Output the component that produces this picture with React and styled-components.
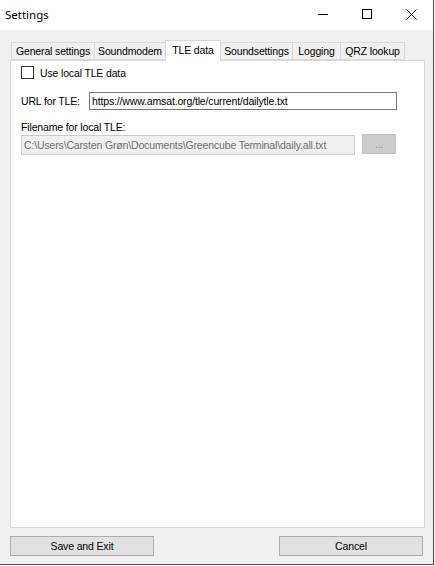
import React from "react";
import styled, { createGlobalStyle } from "styled-components";

const GlobalStyle = createGlobalStyle`
  html, body {
    margin: 0;
    padding: 0;
    background: #ffffff;
  }
  * {
    box-sizing: border-box;
  }
`;

const tabs = [
  { label: "General settings", width: 84 },
  { label: "Soundmodem", width: 72 },
  { label: "TLE data", width: 56, active: true },
  { label: "Soundsettings", width: 73 },
  { label: "Logging", width: 49 },
  { label: "QRZ lookup", width: 65 },
];

const App = () => {
  return (
    <>
      <GlobalStyle />
      <Window>
        <TitleBar>
          <Title>Settings</Title>
          <Controls>
            <CtrlButton>
              <svg width="10" height="10" viewBox="0 0 10 10">
                <line x1="0" y1="5.5" x2="10" y2="5.5" stroke="#000" strokeWidth="1" />
              </svg>
            </CtrlButton>
            <CtrlButton>
              <svg width="10" height="10" viewBox="0 0 10 10">
                <rect x="0.5" y="0.5" width="9" height="9" fill="none" stroke="#000" strokeWidth="1" />
              </svg>
            </CtrlButton>
            <CtrlButton>
              <svg width="11" height="11" viewBox="0 0 11 11">
                <path d="M0.5 0.5 L10.5 10.5 M10.5 0.5 L0.5 10.5" stroke="#000" strokeWidth="1" />
              </svg>
            </CtrlButton>
          </Controls>
        </TitleBar>

        <Body>
          <TabStrip>
            {tabs.map((t) => (
              <Tab key={t.label} $width={t.width} $active={t.active}>
                {t.label}
              </Tab>
            ))}
          </TabStrip>

          <Panel>
            <CheckRow>
              <CheckBox />
              <span>Use local TLE data</span>
            </CheckRow>

            <UrlRow>
              <Label>URL for TLE:</Label>
              <TextField>https://www.amsat.org/tle/current/dailytle.txt</TextField>
            </UrlRow>

            <FieldLabel>Filename for local TLE:</FieldLabel>
            <FileRow>
              <DisabledField>
                C:\Users\Carsten Grøn\Documents\Greencube Terminal\daily.all.txt
              </DisabledField>
              <BrowseButton>...</BrowseButton>
            </FileRow>
          </Panel>

          <Footer>
            <Button>Save and Exit</Button>
            <Button>Cancel</Button>
          </Footer>
        </Body>
      </Window>
    </>
  );
};

export default App;

const Window = styled.div`
  width: 434px;
  height: 565px;
  display: flex;
  flex-direction: column;
  background: #f0f0f0;
  border-right: 1px solid #4a4a4a;
  border-bottom: 1px solid #4a4a4a;
  font-family: "Liberation Sans", Arial, sans-serif;
  font-size: 10.5px;
  letter-spacing: -0.15px;
  color: #000;
`;

const TitleBar = styled.div`
  height: 30px;
  flex: none;
  background: #ffffff;
  display: flex;
  align-items: center;
  padding-left: 5px;
`;

const Title = styled.div`
  font-family: "Noto Sans", sans-serif;
  font-size: 11.5px;
  letter-spacing: 0;
  flex: 1;
  margin-top: -2px;
`;

const Controls = styled.div`
  display: flex;
  height: 100%;
`;

const CtrlButton = styled.div`
  width: 44px;
  height: 100%;
  display: flex;
  align-items: center;
  justify-content: center;
  padding-bottom: 2px;
`;

const Body = styled.div`
  flex: 1;
  display: flex;
  flex-direction: column;
  padding: 10px 8px 8px 10px;
`;

const TabStrip = styled.div`
  display: flex;
  align-items: flex-end;
  height: 20px;
  padding-left: 1px;
  position: relative;
  z-index: 1;
`;

const Tab = styled.div`
  width: ${(p) => p.$width}px;
  height: ${(p) => (p.$active ? "21px" : "18px")};
  margin-bottom: ${(p) => (p.$active ? "-1px" : "0")};
  background: ${(p) => (p.$active ? "#ffffff" : "#f0f0f0")};
  border: 1px solid #d9d9d9;
  border-bottom: ${(p) => (p.$active ? "none" : "1px solid #d9d9d9")};
  margin-left: -1px;
  display: flex;
  align-items: center;
  justify-content: center;
  padding-bottom: ${(p) => (p.$active ? "3px" : "0")};
  white-space: nowrap;
  &:first-child {
    margin-left: 0;
  }
`;

const Panel = styled.div`
  flex: 1;
  background: #ffffff;
  border: 1px solid #d9d9d9;
  display: flex;
  flex-direction: column;
  padding: 5px 10px;
`;

const CheckRow = styled.div`
  display: flex;
  align-items: center;
  gap: 6px;
  height: 13px;
`;

const CheckBox = styled.div`
  width: 13px;
  height: 13px;
  border: 1px solid #333333;
  background: #ffffff;
`;

const UrlRow = styled.div`
  display: flex;
  align-items: center;
  margin-top: 13px;
`;

const Label = styled.span`
  width: 68px;
`;

const TextField = styled.div`
  width: 308px;
  height: 18px;
  border: 1px solid #7a7a7a;
  padding: 0 2px;
  display: flex;
  align-items: center;
  white-space: nowrap;
`;

const FieldLabel = styled.div`
  margin-top: 11px;
  height: 13px;
  line-height: 13px;
`;

const FileRow = styled.div`
  display: flex;
  align-items: flex-start;
  gap: 7px;
`;

const DisabledField = styled.div`
  width: 334px;
  height: 20px;
  margin-top: 1px;
  border: 1px solid #cccccc;
  background: #f0f0f0;
  color: #6d6d6d;
  padding: 0 2px;
  display: flex;
  align-items: center;
  white-space: nowrap;
  overflow: hidden;
`;

const BrowseButton = styled.div`
  width: 34px;
  height: 20px;
  background: #cccccc;
  border: 1px solid #bfbfbf;
  color: #838383;
  display: flex;
  align-items: center;
  justify-content: center;
  font-size: 10px;
`;

const Footer = styled.div`
  display: flex;
  justify-content: space-between;
  margin-top: 8px;
  padding-right: 2px;
`;

const Button = styled.div`
  width: 144px;
  height: 20px;
  background: #e1e1e1;
  border: 1px solid #adadad;
  display: flex;
  align-items: center;
  justify-content: center;
`;
